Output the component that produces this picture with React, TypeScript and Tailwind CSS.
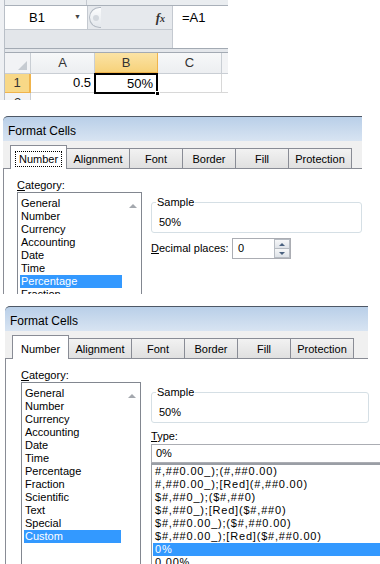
import React from "react";

const ui = "font-['Liberation_Sans',Arial,sans-serif]";

const tabs: [string, string][] = [
  ["Number", "w-[57px]"],
  ["Alignment", "w-[64px]"],
  ["Font", "w-[54px]"],
  ["Border", "w-[54px]"],
  ["Fill", "w-[54px]"],
  ["Protection", "w-[64px]"],
];

const categories = [
  "General",
  "Number",
  "Currency",
  "Accounting",
  "Date",
  "Time",
  "Percentage",
  "Fraction",
  "Scientific",
  "Text",
  "Special",
  "Custom",
];

const types = [
  "#,##0.00_);(#,##0.00)",
  "#,##0.00_);[Red](#,##0.00)",
  "$#,##0_);($#,##0)",
  "$#,##0_);[Red]($#,##0)",
  "$#,##0.00_);($#,##0.00)",
  "$#,##0.00_);[Red]($#,##0.00)",
  "0%",
  "0.00%",
];

function Excel() {
  return (
    <div className="flex h-[100px] w-[228px] shrink-0 overflow-hidden bg-[#e9ecf0] font-['Liberation_Sans',Arial,sans-serif] text-[13px] text-black">
      <div className="w-[5px] shrink-0 border-r border-[#b9bfc7] bg-[#eef0f3]" />
      <div className="flex flex-1 flex-col">
        <div className="flex h-[6px] shrink-0 border-b border-[#a9b0b9] bg-[#eaedf0]">
          <div className="w-[82px] border-r border-[#c4c9d0]" />
        </div>
        <div className="flex h-[23px] shrink-0">
          <div className="flex w-[82px] items-center bg-white pl-[24px] pr-[6px]">
            <span className="flex-1">B1</span>
            <span className="text-[7px] text-[#444]">▼</span>
          </div>
          <div className="flex w-[85px] items-center border-l border-[#c4c9d0] bg-[#e6e9ed]">
            <div className="ml-[1px] flex h-[21px] w-[12px] items-center justify-center rounded-l-full border border-r-0 border-[#b3bac3] bg-gradient-to-b from-[#fbfcfd] to-[#e3e7ec]">
              <div className="h-[6px] w-[6px] rounded-full bg-[#d3d8de]" />
            </div>
            <span className="ml-auto mr-[7px] font-['Liberation_Serif',serif] text-[13px] font-bold italic text-[#333]">
              f<span className="text-[10px]">x</span>
            </span>
          </div>
          <div className="flex-1 border-l border-[#c4c9d0] bg-white pl-[9px] leading-[23px]">=A1</div>
        </div>
        <div className="flex h-[19px] shrink-0">
          <div className="w-[167px] border-t border-[#c4c9d0] bg-[#e3e6ea]" />
          <div className="flex-1 border-l border-[#c4c9d0] bg-white" />
        </div>
        <div className="h-[5px] shrink-0 border-y border-[#a3aab3] bg-[#e4e7eb]" />
        <div className="flex h-[21px] shrink-0 text-[#333]">
          <div className="flex w-[26px] items-end justify-end border-r border-b border-[#c9ced4] bg-[#f2f3f5] p-[3px]">
            <svg width="9" height="9" viewBox="0 0 9 9">
              <path d="M9 0 L9 9 L0 9 Z" fill="#c6cbd1" />
            </svg>
          </div>
          <div className="flex w-[64px] items-center justify-center border-r border-b border-[#c9ced4] bg-gradient-to-b from-[#f7f8f9] to-[#eceef1]">A</div>
          <div className="flex w-[63px] items-center justify-center border-r border-b-2 border-[#f0b44c] bg-gradient-to-b from-[#fbe3a5] to-[#f7d27a]">B</div>
          <div className="flex w-[64px] items-center justify-center border-r border-b border-[#c9ced4] bg-gradient-to-b from-[#f7f8f9] to-[#eceef1]">C</div>
          <div className="flex-1 border-b border-[#c9ced4] bg-[#f2f3f5]" />
        </div>
        <div className="flex h-[19px] shrink-0">
          <div className="flex w-[26px] items-center justify-center border-r-2 border-b border-[#f0b44c] bg-[#f8d887] text-[#333]">1</div>
          <div className="flex w-[64px] items-center justify-end border-r border-b border-[#d8d8d8] bg-white pr-[3px]">0.5</div>
          <div className="relative -mt-px -ml-px flex h-[21px] w-[64px] items-center justify-end border-2 border-black bg-white pr-[3px]">
            50%
            <div className="absolute -right-[4px] -bottom-[4px] h-[5px] w-[5px] border border-white bg-black" />
          </div>
          <div className="w-[64px] border-r border-b border-[#d8d8d8] bg-white" />
          <div className="flex-1 border-b border-[#d8d8d8] bg-white" />
        </div>
        <div className="flex h-[19px] shrink-0">
          <div className="flex w-[26px] items-center justify-center border-r border-[#c9ced4] bg-[#f2f3f5] text-[#333]">2</div>
          <div className="flex-1 bg-white" />
        </div>
      </div>
    </div>
  );
}

function TabStrip({ focus }: { focus: boolean }) {
  return (
    <div className="flex h-[28px] items-end border-b border-[#898c95] px-[7px] pt-[5px]">
      {tabs.map(([name, w], i) =>
        i === 0 ? (
          <div
            key={name}
            className={`${w} relative -mb-px flex h-[24px] items-center justify-center border border-b-0 border-[#898c95] bg-white pt-[2px]`}
          >
            <span className={focus ? "border border-dotted border-black px-[3px] leading-[14px]" : "px-[4px] leading-[14px]"}>
              {name}
            </span>
          </div>
        ) : (
          <div
            key={name}
            className={`${w} -ml-px flex h-[20px] items-center justify-center border border-b-0 border-[#898c95] bg-gradient-to-b from-[#f2f2f2] to-[#e0e0e0] pt-[2px]`}
          >
            {name}
          </div>
        )
      )}
    </div>
  );
}

function CategoryList({ selected, w }: { selected: string; w: string }) {
  return (
    <div className={`${w} flex h-[400px] border border-[#828790] bg-white`}>
      <div className="flex flex-1 flex-col px-[2px] pt-[4px]">
        {categories.map((c) => (
          <div
            key={c}
            className={
              c === selected
                ? "h-[13px] bg-[#3399ff] pl-[1px] leading-[13px] text-white"
                : "h-[13px] pl-[1px] leading-[13px]"
            }
          >
            {c}
          </div>
        ))}
      </div>
      <div className="flex w-[17px] justify-center pt-[11px]">
        <div className="h-0 w-0 border-x-[4px] border-b-[4px] border-x-transparent border-b-[#a4a8ae]" />
      </div>
    </div>
  );
}

function Sample({ w }: { w: string }) {
  return (
    <fieldset className={`${w} rounded-[3px] border border-[#d5dfe5] pb-[3px] pl-[4px]`}>
      <legend className="px-[1px] leading-[13px]">Sample</legend>
      <div className="pt-[7px] pl-[3px] leading-[13px]">50%</div>
    </fieldset>
  );
}

function Title({ w }: { w: string }) {
  return (
    <div
      className={`${w} h-[25px] rounded-tl-[5px] border-t border-[#4e5866] bg-gradient-to-b from-[#b9cfe8] to-[#d8e4f2] pt-[2px] pl-[5px] text-[12px] leading-[24px]`}
    >
      Format Cells
    </div>
  );
}

function DialogPercent() {
  return (
    <div className={`${ui} h-[178px] shrink-0 overflow-hidden pl-[3px] text-[11px] text-black`}>
      <div className="w-[359px]">
        <Title w="w-[359px]" />
        <div className="bg-[#f0f0f0]">
          <TabStrip focus />
        </div>
        <div className="flex h-[200px] border-l border-[#898c95] bg-white">
          <div className="flex flex-col pt-[10px] pl-[13px]">
            <div className="h-[13px] leading-[13px]">
              <span className="underline">C</span>ategory:
            </div>
            <CategoryList selected="Percentage" w="w-[125px]" />
          </div>
          <div className="flex flex-1 flex-col pt-[27px] pl-[9px]">
            <Sample w="w-full" />
            <div className="mt-[5px] flex h-[21px] items-center">
              <div className="w-[81px]">
                <span className="underline">D</span>ecimal places:
              </div>
              <div className="flex h-[21px] w-[59px] border border-[#abadb3] bg-white">
                <div className="flex-1 pl-[5px] leading-[19px]">0</div>
                <div className="flex w-[16px] flex-col">
                  <div className="flex flex-1 items-center justify-center border border-[#b7bcc3] bg-gradient-to-b from-[#f6f7f8] to-[#dfe3e8]">
                    <div className="h-0 w-0 border-x-[3px] border-b-[3px] border-x-transparent border-b-[#4b6280]" />
                  </div>
                  <div className="flex flex-1 items-center justify-center border border-t-0 border-[#b7bcc3] bg-gradient-to-b from-[#f6f7f8] to-[#dfe3e8]">
                    <div className="h-0 w-0 border-x-[3px] border-t-[3px] border-x-transparent border-t-[#4b6280]" />
                  </div>
                </div>
              </div>
            </div>
          </div>
        </div>
      </div>
    </div>
  );
}

function DialogCustom() {
  return (
    <div className={`${ui} h-[258px] shrink-0 overflow-hidden pl-[5px] text-[11px] text-black`}>
      <Title w="w-[363px]" />
      <div className="w-[363px] bg-[#f0f0f0]">
        <TabStrip focus={false} />
      </div>
      <div className="flex h-[300px] w-[420px] border-l border-[#898c95] bg-white">
        <div className="flex flex-col pt-[10px] pl-[15px]">
          <div className="h-[13px] leading-[13px]">
            <span className="underline">C</span>ategory:
          </div>
          <CategoryList selected="Custom" w="w-[120px]" />
        </div>
        <div className="flex w-[260px] flex-col pt-[27px] pl-[10px]">
          <Sample w="w-[218px]" />
          <div className="mt-[7px] h-[13px] leading-[13px]">
            <span className="underline">T</span>ype:
          </div>
          <div className="mt-[1px] h-[19px] border border-[#abadb3] bg-white pl-[4px] leading-[17px]">0%</div>
          <div className="border border-t-2 border-[#9a9ea5] bg-white px-[1px]">
            {types.map((t) => (
              <div
                key={t}
                className={
                  t === "0%"
                    ? "h-[13px] bg-[#3399ff] pl-[2px] leading-[13px] tracking-[0.8px] text-white"
                    : "h-[13px] pl-[2px] leading-[13px] tracking-[0.8px]"
                }
              >
                {t}
              </div>
            ))}
          </div>
        </div>
      </div>
    </div>
  );
}

export default function App() {
  return (
    <div className="flex h-[564px] w-[380px] flex-col overflow-hidden bg-white">
      <Excel />
      <div className="h-[16px] shrink-0" />
      <DialogPercent />
      <div className="h-[12px] shrink-0" />
      <DialogCustom />
    </div>
  );
}
